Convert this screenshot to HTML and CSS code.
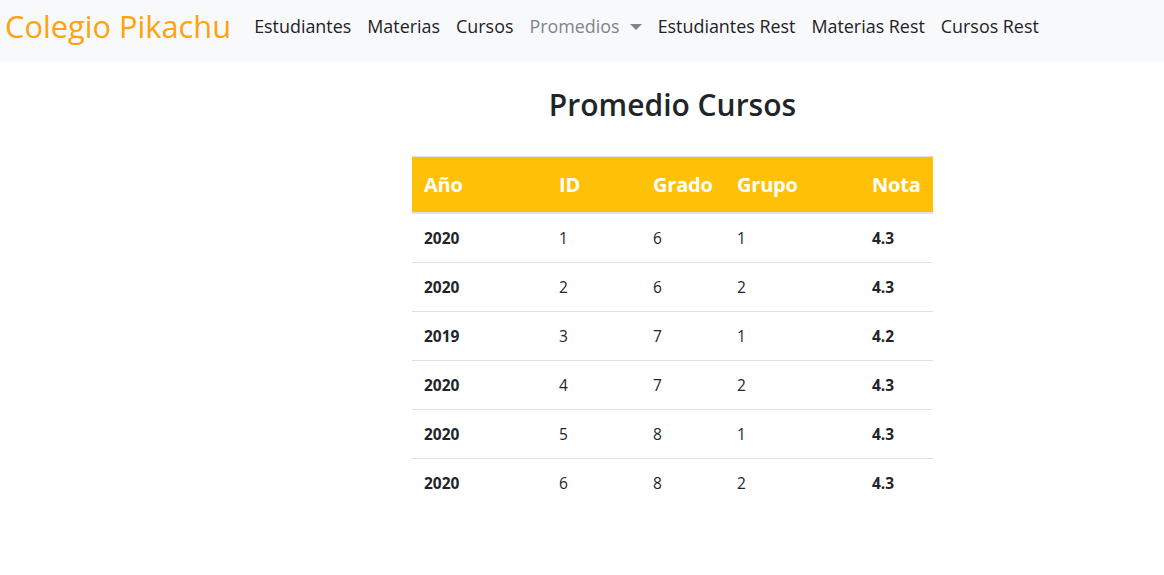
FILE: index.html
```html
<!DOCTYPE html>
<html lang="es">
<head>
<meta charset="utf-8">
<title>Colegio Pikachu</title>
<link rel="stylesheet" href="styles.css">
</head>
<body>
<nav class="navbar">
  <a class="brand" href="#">Colegio Pikachu</a>
  <ul class="nav">
    <li><a class="nav-link" href="#">Estudiantes</a></li>
    <li><a class="nav-link" href="#">Materias</a></li>
    <li><a class="nav-link" href="#">Cursos</a></li>
    <li><a class="nav-link muted dropdown" href="#">Promedios<span class="caret"></span></a></li>
    <li><a class="nav-link" href="#">Estudiantes Rest</a></li>
    <li><a class="nav-link" href="#">Materias Rest</a></li>
    <li><a class="nav-link" href="#">Cursos Rest</a></li>
  </ul>
</nav>
<main class="main">
  <section class="panel">
    <h2 class="title">Promedio Cursos</h2>
    <table class="table">
      <colgroup>
        <col class="c1"><col class="c2"><col class="c3"><col class="c4"><col class="c5">
      </colgroup>
      <thead>
        <tr><th>Año</th><th>ID</th><th>Grado</th><th>Grupo</th><th>Nota</th></tr>
      </thead>
      <tbody>
        <tr><th>2020</th><td>1</td><td>6</td><td>1</td><th>4.3</th></tr>
        <tr><th>2020</th><td>2</td><td>6</td><td>2</td><th>4.3</th></tr>
        <tr><th>2019</th><td>3</td><td>7</td><td>1</td><th>4.2</th></tr>
        <tr><th>2020</th><td>4</td><td>7</td><td>2</td><th>4.3</th></tr>
        <tr><th>2020</th><td>5</td><td>8</td><td>1</td><th>4.3</th></tr>
        <tr><th>2020</th><td>6</td><td>8</td><td>2</td><th>4.3</th></tr>
      </tbody>
    </table>
  </section>
</main>
</body>
</html>
```
FILE: styles.css
```css
* { box-sizing: border-box; }
html, body { margin: 0; padding: 0; }
body {
  font-family: "Open Sans", "Noto Sans", "Liberation Sans", sans-serif;
  color: #212529;
  background: #fff;
  font-size: 16px;
  line-height: 1.5;
}
a { text-decoration: none; }

.navbar {
  display: flex;
  align-items: flex-start;
  height: 62px;
  padding: 3px 5px 0;
  background: #f8f9fa;
}
.brand {
  color: #ffa20f;
  font-size: 30.8px;
  line-height: 46px;
  margin-right: 15px;
}
.nav {
  display: flex;
  list-style: none;
  margin: 0;
  padding: 4px 0 0;
}
.nav-link {
  display: flex;
  align-items: center;
  padding: 8px 8px;
  font-size: 17.9px;
  line-height: 23px;
  color: #1f2125;
}
.nav-link.muted { color: #7f8489; }
.caret {
  display: inline-block;
  width: 0;
  height: 0;
  margin-left: 10px;
  margin-top: 1px;
  border-top: 6px solid #7f8489;
  border-left: 6px solid transparent;
  border-right: 6px solid transparent;
}

.main {
  display: flex;
  padding-left: 412px;
}
.panel {
  width: 521px;
}
.title {
  margin: 25px 0 33px;
  text-align: center;
  font-size: 30px;
  font-weight: 600;
  line-height: 1.2;
  color: #212529;
}
.table {
  width: 521px;
  border-collapse: collapse;
}
.c1 { width: 135px; }
.c2 { width: 94px; }
.c3 { width: 84px; }
.c4 { width: 135px; }
.c5 { width: 73px; }
.table th, .table td {
  text-align: left;
  padding: 12px 12px;
  vertical-align: top;
}
.table thead th {
  background: #ffc107;
  color: #fff;
  font-size: 20px;
  font-weight: 700;
  line-height: 31px;
  padding: 12px 12px 12px;
  border-top: 1px solid #dee2e6;
  border-bottom: 2px solid #dee2e6;
  letter-spacing: -0.2px;
}
.table tbody th, .table tbody td {
  font-size: 15.5px;
  line-height: 24px;
  border-top: 1px solid #dee2e6;
}
.table tbody tr:first-child th, .table tbody tr:first-child td { border-top: 0; }
.table tbody th { font-weight: 700; }
.table tbody td { font-weight: 400; }
```
